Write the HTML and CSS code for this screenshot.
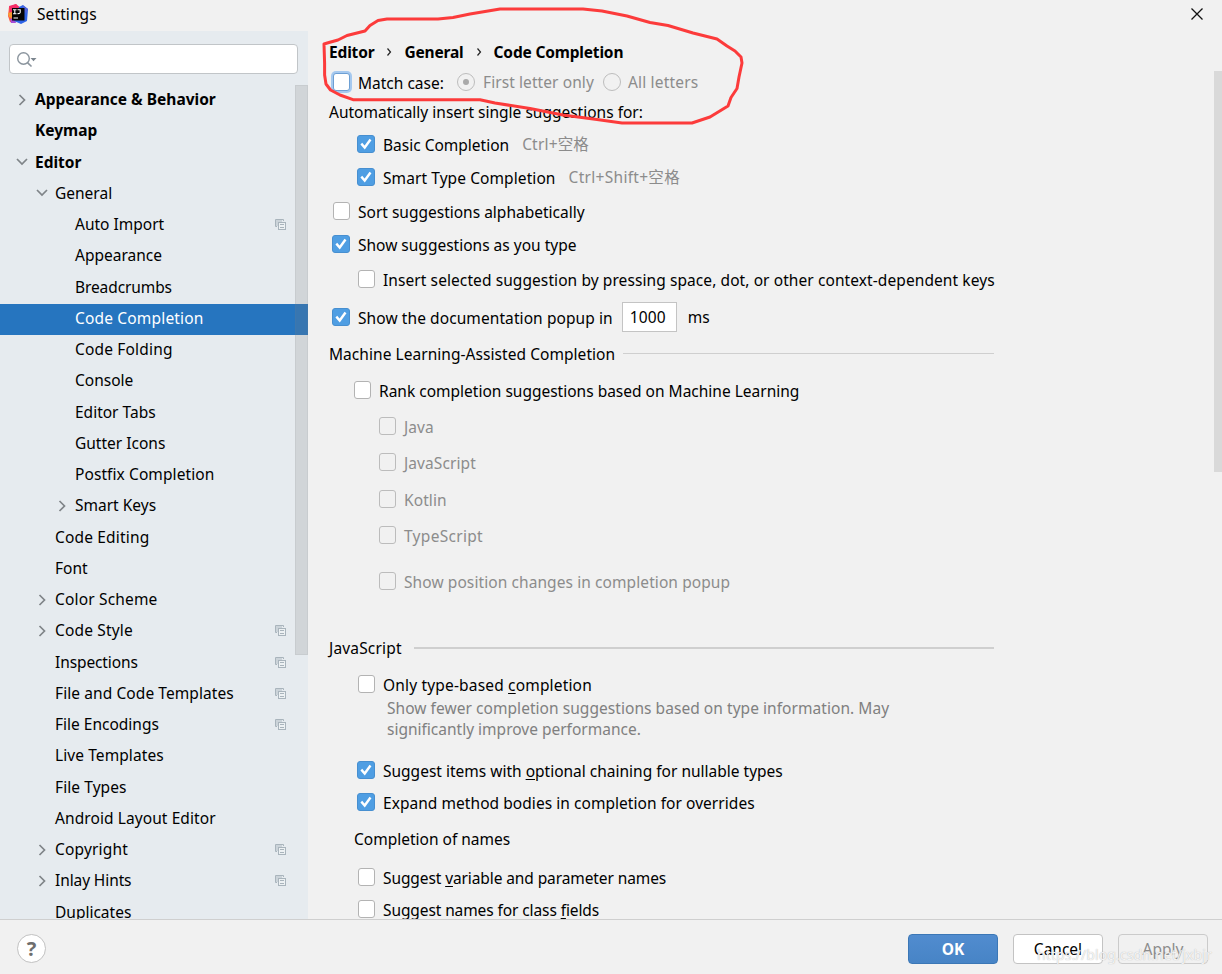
FILE: index.html
```
<!DOCTYPE html>
<html lang="en">
<head>
<meta charset="utf-8">
<title>Settings</title>
<link rel="stylesheet" href="styles.css">
</head>
<body>
<svg class="defs" aria-hidden="true">
  <symbol id="right" viewBox="0 0 16 16"><path d="M5.5 3L10.5 8L5.5 13" fill="none" stroke="#7f8488" stroke-width="1.7"/></symbol>
  <symbol id="down" viewBox="0 0 16 16"><path d="M3 5L8 10L13 5" fill="none" stroke="#7f8488" stroke-width="1.7"/></symbol>
  <symbol id="copy" viewBox="0 0 11 11"><path d="M2 7.500H.5V.5H8.500V2" fill="none" stroke="#a9b4bc"/><rect x="1" y="1" width="6" height="6" fill="#cbd3d9"/><rect x="3.500" y="3.500" width="7" height="7" fill="#edf1f3" stroke="#a9b4bc"/><path d="M5 5.500H9M5 8.500H9" stroke="#a9b4bc"/></symbol>
  <symbol id="tick" viewBox="0 0 18 18"><path d="M4.300 8.600L7.700 12.500L13.500 4.500" fill="none" stroke="#fff" stroke-width="2.400"/></symbol>
</svg>
<div class="window">
  <header class="titlebar">
    <svg class="logo" viewBox="0 0 20 20">
      <path d="M1 3L8 0L11 4L7 19L2 18L0 12Z" fill="#fc5c42"/>
      <path d="M1 2L8 0L14 5L2 9Z" fill="#f52d68"/>
      <path d="M0 9L4 8L4 14L1 13Z" fill="#f79a32"/>
      <path d="M2 15L6 14L8 19L3 19Z" fill="#a64bd6"/>
      <path d="M11 3L15 1L20 5L19 17L13 20L6 17Z" fill="#2f64e8"/>
      <path d="M14 1L20 5L18 10Z" fill="#5263db"/>
      <rect x="4" y="4" width="12.500" height="12.500" fill="#050505"/>
      <path d="M5 5.700H8.500M6.800 5.500V10M5 9.700H8.500M9.500 5.700H12.200V8.500Q12 9.800 9.500 9.600M5.500 14H10" fill="none" stroke="#fff" stroke-width="1.100"/>
    </svg>
    <span class="title">Settings</span>
    <svg class="close" viewBox="0 0 12 12"><path d="M.5 .5L11.500 11.500M11.500 .5L.5 11.500" stroke="#111" stroke-width="1.300"/></svg>
  </header>
  <div class="body">
    <nav class="sidebar">
      <div class="search"><svg viewBox="0 0 22 18"><circle cx="7.500" cy="7.500" r="5.800" fill="none" stroke="#8b959e" stroke-width="1.400"/><path d="M11.500 11.700L15.500 15.500" stroke="#8b959e" stroke-width="1.700"/><path d="M14.500 7H20.500L17.500 10.200Z" fill="#7b858e"/></svg></div>
      <div class="tree">
        <div class="item l0 bold"><svg><use href="#right"/></svg><span>Appearance &amp; Behavior</span></div>
        <div class="item l0 bold"><i></i><span>Keymap</span></div>
        <div class="item l0 bold"><svg><use href="#down"/></svg><span>Editor</span></div>
        <div class="item l1"><svg><use href="#down"/></svg><span>General</span></div>
        <div class="item l2"><i></i><span>Auto Import</span><svg class="copy"><use href="#copy"/></svg></div>
        <div class="item l2"><i></i><span>Appearance</span></div>
        <div class="item l2"><i></i><span class="tight">Breadcrumbs</span></div>
        <div class="item l2 selected"><i></i><span class="wider">Code Completion</span></div>
        <div class="item l2"><i></i><span class="wider">Code Folding</span></div>
        <div class="item l2"><i></i><span>Console</span></div>
        <div class="item l2"><i></i><span>Editor Tabs</span></div>
        <div class="item l2"><i></i><span>Gutter Icons</span></div>
        <div class="item l2"><i></i><span class="wide">Postfix Completion</span></div>
        <div class="item l2"><svg><use href="#right"/></svg><span>Smart Keys</span></div>
        <div class="item l1"><i></i><span class="wider">Code Editing</span></div>
        <div class="item l1"><i></i><span>Font</span></div>
        <div class="item l1"><svg><use href="#right"/></svg><span class="wider">Color Scheme</span></div>
        <div class="item l1"><svg><use href="#right"/></svg><span class="wider">Code Style</span><svg class="copy"><use href="#copy"/></svg></div>
        <div class="item l1"><i></i><span class="tight">Inspections</span><svg class="copy"><use href="#copy"/></svg></div>
        <div class="item l1"><i></i><span class="wide">File and Code Templates</span><svg class="copy"><use href="#copy"/></svg></div>
        <div class="item l1"><i></i><span>File Encodings</span><svg class="copy"><use href="#copy"/></svg></div>
        <div class="item l1"><i></i><span class="wide">Live Templates</span></div>
        <div class="item l1"><i></i><span class="wide">File Types</span></div>
        <div class="item l1"><i></i><span class="wide">Android Layout Editor</span></div>
        <div class="item l1"><svg><use href="#right"/></svg><span class="wider">Copyright</span><svg class="copy"><use href="#copy"/></svg></div>
        <div class="item l1"><svg><use href="#right"/></svg><span class="tight">Inlay Hints</span><svg class="copy"><use href="#copy"/></svg></div>
        <div class="item l1"><i></i><span>Duplicates</span></div>
      </div>
      <div class="side-thumb"></div>
    </nav>
    <main class="form">
      <div class="row crumbs"><span>Editor</span><svg viewBox="0 0 6 8"><path d="M1.500 .5L4.500 4L1.500 7.500" fill="none" stroke="#222" stroke-width="1.200"/></svg><span>General</span><svg viewBox="0 0 6 8"><path d="M1.500 .5L4.500 4L1.500 7.500" fill="none" stroke="#222" stroke-width="1.200"/></svg><span>Code Completion</span></div>
      <div class="row in0"><b class="box focus"></b><span class="match">Match case:</span><b class="radio on"></b><span class="dim first wide">First letter only</span><b class="radio"></b><span class="dim wider">All letters</span></div>
      <div class="row">Automatically insert single suggestions for:</div>
      <div class="row in1"><b class="box on"><svg><use href="#tick"/></svg></b><span>Basic Completion</span><span class="key wider">Ctrl+空格</span></div>
      <div class="row in1"><b class="box on"><svg><use href="#tick"/></svg></b><span class="wide">Smart Type Completion</span><span class="key widest">Ctrl+Shift+空格</span></div>
      <div class="row in0"><b class="box"></b><span>Sort suggestions alphabetically</span></div>
      <div class="row in0"><b class="box on"><svg><use href="#tick"/></svg></b><span>Show suggestions as you type</span></div>
      <div class="row in1"><b class="box"></b><span class="wide">Insert selected suggestion by pressing space, dot, or other context-dependent keys</span></div>
      <div class="row in0"><b class="box on"><svg><use href="#tick"/></svg></b><span class="wide">Show the documentation popup in</span><span class="field">1000</span><span class="ms">ms</span></div>
      <div class="row section"><span class="ml">Machine Learning-Assisted Completion</span><hr></div>
      <div class="row in-ml"><b class="box"></b><span>Rank completion suggestions based on Machine Learning</span></div>
      <div class="row in2 off"><b class="box"></b><span class="wide">Java</span></div>
      <div class="row in2 off"><b class="box"></b><span class="wide">JavaScript</span></div>
      <div class="row in2 off"><b class="box"></b><span class="wide">Kotlin</span></div>
      <div class="row in2 off"><b class="box"></b><span class="widest">TypeScript</span></div>
      <div class="row in2 off"><b class="box"></b><span class="wide">Show position changes in completion popup</span></div>
      <div class="gap"></div>
      <div class="row section js"><span class="wider">JavaScript</span><hr></div>
      <div class="row in1"><b class="box"></b><span class="wider">Only type-based <u>c</u>ompletion</span></div>
      <div class="comment"><span class="ml">Show fewer completion suggestions based on type information. May</span><br><span>significantly improve performance.</span></div>
      <div class="gap"></div>
      <div class="row in1"><b class="box on"><svg><use href="#tick"/></svg></b><span>Suggest items with <u>o</u>ptional chaining for nullable types</span></div>
      <div class="row in1"><b class="box on"><svg><use href="#tick"/></svg></b><span class="ml">Expand method bodies in completion for overrides</span></div>
      <div class="row names">Completion of names</div>
      <div class="row in1"><b class="box"></b><span class="tight">Suggest <u>v</u>ariable and parameter names</span></div>
      <div class="row in1"><b class="box"></b><span class="tight">Suggest names for class <u>f</u>ields</span></div>
      <div class="main-thumb"></div>
    </main>
  </div>
  <footer class="footer">
    <div class="help">?</div>
    <div class="buttons"><div class="btn primary">OK</div><div class="btn">Cancel</div><div class="btn disabled">Apply</div></div>
    <div class="watermark">https://blog.csdn.net/jxbjr</div>
  </footer>
  <svg class="ink" viewBox="0 0 440 140"><path d="M14 44L19 42.500L28 40L37 35.500L45 33.500L55 31L60 25.500L68 20.500L77 19H128L143 17.500L160 14L190 9H273L292 11L317 16L340 22.500L358 25.500L383 33L407 39L417 46L425 51L431 57L432 63L429 77L427 88.500L421 97.500L418 106L400 117L382 123H312L287 119.500L253 115L220 108.500L185 103L170 99.700H43L30 95L20.500 90L16 84L14.600 75V63L14 44Z"/></svg>
</div>
</body>
</html>
```
FILE: styles.css
```
* { box-sizing: border-box; }
body { margin: 0; font: 15.5px/20px "Noto Sans", "Noto Sans CJK SC", sans-serif; color: #000; }
.defs { position: absolute; width: 0; height: 0; }
.window { position: relative; width: 1222px; height: 974px; overflow: hidden; display: flex; flex-direction: column; background: #f1f1f1; }
.titlebar { height: 31px; flex: none; display: flex; align-items: center; padding: 0 19px 3px 8px; }
.logo { width: 20px; height: 20px; margin-right: 9px; }
.title { flex: 1; letter-spacing: .1px; }
.close { width: 12px; height: 12px; }
.body { height: 888px; display: flex; flex: none; overflow: hidden; }
.sidebar { position: relative; width: 308px; flex: none; background: #e6ebef; padding-top: 13px; }
.search { width: 289px; height: 30px; margin: 0 0 11px 9px; background: #fff; border: 1px solid #c1c5c8; border-radius: 4px; padding: 6px; }
.search svg { display: block; width: 22px; height: 18px; }
.item { height: 31.25px; display: flex; align-items: center; padding: 0 22px 2px 0; white-space: nowrap; }
.item > svg:first-child, .item > i { width: 16px; height: 16px; flex: none; margin-right: 5px; }
.item span { flex: 1; padding-bottom: 1px; }
.item > svg.copy { width: 11px; height: 11px; }
.item.l0 { padding-left: 14px; }
.item.l1 { padding-left: 34px; }
.item.l2 { padding-left: 54px; }
.bold { font-weight: 700; }
.selected { background: #2675bf; color: #fff; }
.tight { letter-spacing: -.1px; }
.ml { letter-spacing: .05px; }
.wide { letter-spacing: .085px; }
.wider { letter-spacing: .17px; }
.widest { letter-spacing: .3px; }
.side-thumb { position: absolute; left: 295px; top: 54px; width: 13px; height: 570px; background: rgba(125,125,125,.2); border: 1px solid rgba(125,125,125,.1); }
.form { position: relative; flex: 1; padding: 6px 0 0 21px; display: grid; grid-template-rows: 30px 30px 30px 33px 34px 34px 32px 37px 40px 33px 39px 34px 38px 35px 37px 56px 16px 45px 28px 42px 14px 32px 32px 42px 33px 32px; }
.form > .row { display: flex; align-items: center; white-space: nowrap; }
.in0 { padding-left: 3px; }
.in1 { padding-left: 28px; }
.in2 { padding-left: 49px; }
.in-ml { padding-left: 24px; }
.names { padding-left: 25px; }
.crumbs { font-weight: 700; letter-spacing: -.17px; }
.crumbs svg { width: 6px; height: 8px; margin: 0 12px; }
.box { width: 17px; height: 18px; flex: none; margin: 0 8px 0 1px; background: #fff; border: 1px solid #b3b3b3; border-radius: 3px; }
.box + span { padding-top: 2px; }
.box.on { width: 18px; margin-left: 0; background: #4f9ee3; border-color: #478fd0; }
.box.on svg { display: block; width: 18px; height: 18px; margin: -1px; }
.box.focus { border-color: #6d9fd3; box-shadow: 0 0 0 2px #a6c9ef; }
.radio { width: 18px; height: 18px; flex: none; border: 1px solid #bdbdbd; border-radius: 50%; margin-right: 7px; display: grid; place-items: center; }
.radio.on { margin-right: 8px; }
.radio.on::after { content: ""; width: 6px; height: 6px; border-radius: 50%; background: #a9a9a9; }
.match { width: 99px; }
.first { width: 120px; }
.dim, .off, .key { color: #8c8c8c; }
.off .box { background: #f1f1f1; border-color: #bcbcbc; }
.key { margin-left: 13px; }
.field { width: 55px; height: 30px; border: 1px solid #c4c4c4; background: #fff; margin: 0 11px 0 9px; padding: 4px 7px; letter-spacing: .1px; }
.section hr { border: 0; height: 1px; background: #cfcfcf; margin: 0 228px 0 8px; flex: 1; }
.section.js hr { height: 2px; margin-left: 12px; }
.comment { color: #808080; padding-left: 58px; line-height: 21px; white-space: nowrap; }
u { text-underline-offset: 2px; text-decoration-skip-ink: none; }
.main-thumb { position: absolute; right: 0; top: 40px; width: 8px; height: 401px; background: #d9d9d9; }
.footer { position: relative; flex: 1; border-top: 1px solid #cfcfcf; display: flex; justify-content: space-between; align-items: flex-start; padding: 14px 14px 0 17px; }
.help { width: 29px; height: 29px; border: 1px solid #c1c1c1; border-radius: 50%; background: #fff; color: #6e6e6e; font-size: 20px; font-weight: 700; line-height: 27px; text-align: center; }
.buttons { display: flex; gap: 15px; }
.btn { width: 90px; height: 30px; border: 1px solid #c3c3c3; border-radius: 4px; background: #fff; text-align: center; line-height: 29px; }
.primary { background: linear-gradient(#518ccf, #4784c6); border-color: #3b77b6; color: #fff; font-weight: 700; }
.disabled { background: #f1f1f1; border-color: #cbcbcb; color: #8c8c8c; }
.watermark { position: absolute; left: 1037px; top: 25px; font-size: 14px; letter-spacing: .12px; color: rgba(255,255,255,.85); text-shadow: 0 0 1px #aaa; white-space: nowrap; }
.ink { position: absolute; left: 310px; top: 0; width: 440px; height: 140px; pointer-events: none; }
.ink path { fill: none; stroke: #fc3b3b; stroke-width: 3; stroke-linejoin: round; }
```
